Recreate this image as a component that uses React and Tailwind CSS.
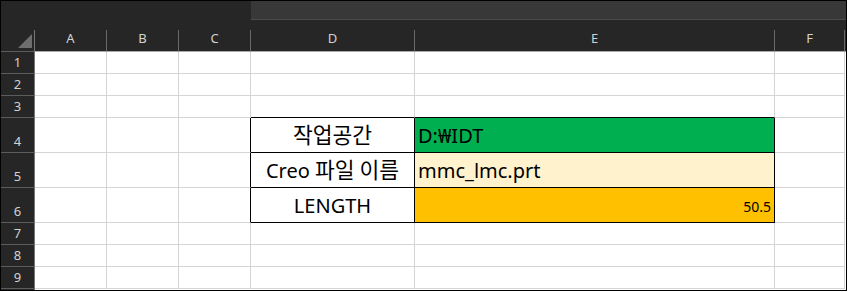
import React from "react";

const COLS = [
  { key: "A", w: "w-[72px]" },
  { key: "B", w: "w-[72px]" },
  { key: "C", w: "w-[72px]" },
  { key: "D", w: "w-[164px]" },
  { key: "E", w: "w-[360px]" },
  { key: "F", w: "w-[70px]" },
];

const ROWS = [
  { n: 1, h: "h-[22px]" },
  { n: 2, h: "h-[22px]" },
  { n: 3, h: "h-[22px]" },
  { n: 4, h: "h-[35px]" },
  { n: 5, h: "h-[35px]" },
  { n: 6, h: "h-[35px]" },
  { n: 7, h: "h-[22px]" },
  { n: 8, h: "h-[22px]" },
  { n: 9, h: "h-[22px]" },
];

const UI_FONT = "font-['Noto_Sans','Liberation_Sans',sans-serif]";
const CELL_FONT =
  "font-['Noto_Sans','Noto_Sans_CJK_KR','Liberation_Sans',sans-serif]";

const Ko = ({ children }) => (
  <span className="text-[21.5px] font-['Noto_Sans_CJK_KR',sans-serif]">{children}</span>
);

// Contents and fills of the bordered block D4:E6
const TABLE = {
  D4: { text: <Ko>작업공간</Ko>, cls: "justify-center text-[20px] pb-[6px]" },
  E4: { text: "D:₩IDT", cls: "justify-start pl-[3px] text-[20px] pb-[6px] bg-[#00b050]" },
  D5: {
    text: (
      <>
        Creo <Ko>파일 이름</Ko>
      </>
    ),
    cls: "justify-center text-[20px] pb-[6px]",
  },
  E5: { text: "mmc_lmc.prt", cls: "justify-start pl-[3px] text-[20px] pb-[6px] bg-[#fff2cc]" },
  D6: { text: "LENGTH", cls: "justify-center text-[20px] pb-[6px]" },
  E6: { text: "50.5", cls: "justify-end pr-[3px] text-[14px] pb-[8px] bg-[#ffc000]" },
};

function Cell({ col, row, w, h }) {
  const id = col + row;
  const inTable = TABLE[id];
  const aboveTable = row === 3 && (col === "D" || col === "E");
  const leftOfTable = col === "C" && row >= 4 && row <= 6;

  const rightBorder =
    inTable || leftOfTable ? "border-r-black" : "border-r-[#d4d4d4]";
  const bottomBorder =
    inTable || aboveTable ? "border-b-black" : "border-b-[#d4d4d4]";

  return (
    <div
      className={`${w} ${h} shrink-0 border-r border-b ${rightBorder} ${bottomBorder} flex items-end leading-none text-black ${CELL_FONT} ${
        inTable ? inTable.cls : "bg-white"
      }`}
    >
      {inTable ? <span className="whitespace-nowrap leading-none">{inTable.text}</span> : null}
    </div>
  );
}

export default function App() {
  return (
    <div className="w-[848px] h-[292px] bg-white">
      <div className="w-[847px] h-[291px] border border-black bg-white overflow-hidden">
        {/* sheet tab strip */}
        <div className="flex h-[19px] w-[845px]">
          <div className="w-[250px] bg-[#262626]" />
          <div className="flex-1 bg-[#383838] border-b border-b-[#4c4c4c]" />
        </div>
        <div className="h-[10px] w-[845px] bg-[#262626]" />

        {/* column headers */}
        <div className={`flex h-[22px] w-[845px] bg-[#262626] ${UI_FONT}`}>
          <div className="w-[34px] shrink-0 border-r border-b border-r-[#767676] border-b-[#5c5c5c] flex items-end justify-end pr-[2px] pb-[3px]">
            <svg width="14" height="14" viewBox="0 0 14 14">
              <polygon points="14,0 14,14 0,14" fill="#6e6e6e" />
            </svg>
          </div>
          {COLS.map((c) => (
            <div
              key={c.key}
              className={`${c.w} shrink-0 border-r border-b border-r-[#6a6a6a] border-b-[#ababab] flex items-center justify-center pb-[3px] text-[13px] text-[#d2d2d2]`}
            >
              {c.key}
            </div>
          ))}
          <div className="flex-1 border-b border-b-[#ababab]" />
        </div>

        {/* rows */}
        {ROWS.map((r) => (
          <div key={r.n} className="flex w-[845px]">
            <div
              className={`w-[34px] ${r.h} shrink-0 bg-[#262626] border-r border-b border-r-[#767676] border-b-[#5c5c5c] flex items-end justify-center pb-[4px] text-[13px] leading-none text-[#d2d2d2] ${UI_FONT}`}
            >
              {r.n}
            </div>
            {COLS.map((c) => (
              <Cell key={c.key} col={c.key} row={r.n} w={c.w} h={r.h} />
            ))}
          </div>
        ))}
        <div className="flex w-[845px] h-[4px]">
          <div className="w-[34px] bg-[#262626] border-r border-r-[#767676]" />
        </div>
      </div>
    </div>
  );
}
